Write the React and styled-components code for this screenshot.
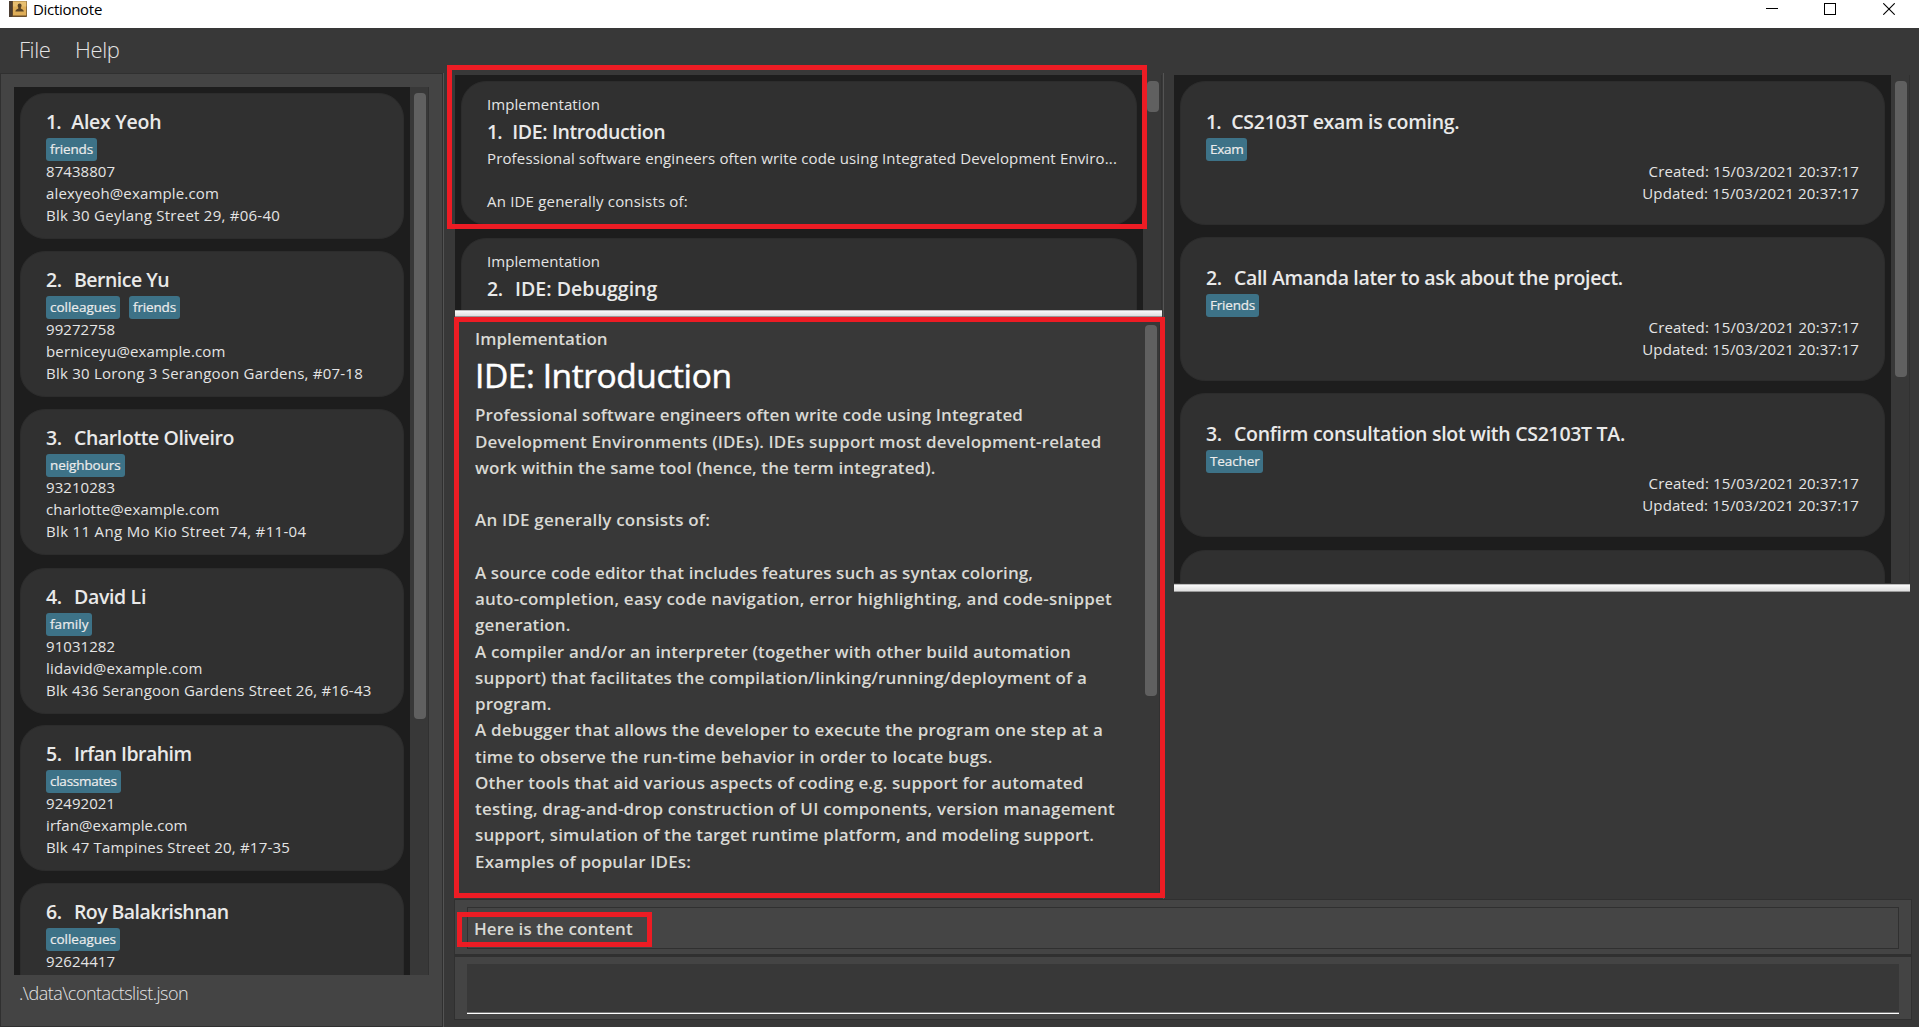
import React from "react";
import styled, { createGlobalStyle } from "styled-components";

const GlobalStyle = createGlobalStyle`
  * { box-sizing: border-box; }
  html, body { margin: 0; padding: 0; }
  body { overflow: hidden; background: #383838; font-family: "Open Sans", "Noto Sans", sans-serif; }
`;

const Window = styled.div`
  position: relative;
  display: flex;
  flex-direction: column;
  width: 1919px;
  height: 1027px;
  overflow: hidden;
  background: #383838;
  color: #e4e4e4;
`;

const TitleBar = styled.header`
  display: flex;
  height: 28px;
  padding: 0 24px 0 9px;
  background: #fff;
  color: #000;
`;

const AppName = styled.span`
  margin-left: 6px;
  font-size: 15px;
  line-height: 18px;
  letter-spacing: -0.3px;
`;

const WindowButtons = styled.div`
  display: flex;
  gap: 46px;
  height: 12px;
  margin: 3px 0 0 auto;

  svg:last-child {
    margin-left: 1px;
  }
`;

const MenuBar = styled.nav`
  display: flex;
  height: 45px;
  padding-left: 19px;
`;

const MenuItem = styled.span`
  width: ${(p) => p.$width}px;
  font-size: 22px;
  font-weight: 300;
  line-height: 42px;
  letter-spacing: ${(p) => p.$track}px;
  white-space: nowrap;
`;

const Main = styled.div`
  display: flex;
  height: 954px;
`;

const ContactsPane = styled.aside`
  width: 443px;
  padding: 13px 13px 0;
  border: 1px solid #303030;
  background: #444;
`;

const ListView = styled.div`
  display: flex;
  width: ${(p) => p.$width}px;
  height: ${(p) => p.$height}px;
  overflow: hidden;
  background: #383838;
`;

const Cells = styled.div`
  display: flex;
  flex: 1;
  flex-direction: column;
  min-width: 0;
  padding: 6px;
  overflow: hidden;
  background: #1d1d1d;
`;

const ScrollTrack = styled.div`
  flex: none;
  width: 19px;
  padding: ${(p) => p.$top ?? 6}px 2px 0 4px;
  border-right: 1px solid #313131;
  background: #383838;
`;

const ScrollThumb = styled.div`
  height: ${(p) => p.$height}px;
  border-radius: 4px;
  background: #606060;
`;

const Card = styled.article`
  display: flex;
  flex: none;
  flex-direction: column;
  height: ${(p) => p.$height}px;
  margin: ${(p) => p.$shift || 0}px 0 ${(p) => p.$gap - (p.$shift || 0)}px;
  padding: ${(p) => p.$pad}px 25px 0;
  border: 1px solid #2c2c2c;
  border-radius: 25px;
  background: #303030;
`;

const Heading = styled.div`
  display: flex;
  flex: none;
  height: 27px;
  margin-top: ${(p) => p.$top || 0}px;
  font-size: 19.5px;
  font-weight: 600;
  line-height: 27px;
  white-space: pre;
  color: #e9e9e9;
`;

const Index = styled.span`
  width: ${(p) => (p.$n === 1 ? 25.3 : 28)}px;
  letter-spacing: ${(p) => (p.$n === 1 ? -1 : -0.4)}px;
`;

const Tracked = styled.span`
  letter-spacing: ${(p) => p.$track || 0}px;
`;

const Tags = styled.div`
  display: flex;
  flex: none;
  gap: 9px;
  height: 22px;
  margin-top: 3px;
`;

const Tag = styled.span`
  flex: none;
  width: ${(p) => p.$width}px;
  height: 23px;
  padding-left: 4px;
  border-radius: 3px;
  background: #3d7287;
  color: #ececec;
  font-size: 13.5px;
  line-height: 22px;
  letter-spacing: ${(p) => p.$track}px;
  -webkit-text-stroke: 0.2px #ececec;
  white-space: nowrap;
`;

const Field = styled.div`
  flex: none;
  height: ${(p) => p.$line || 22}px;
  margin-top: ${(p) => p.$top || 0}px;
  align-self: ${(p) => (p.$right ? "flex-end" : "auto")};
  font-size: 15px;
  line-height: ${(p) => p.$line || 22}px;
  letter-spacing: ${(p) => p.$track || 0}px;
  white-space: nowrap;
`;

const FilePath = styled.div`
  padding: 5px 0 0 5px;
  font-size: 18px;
  font-weight: 300;
  line-height: 26px;
  letter-spacing: -0.5px;
`;

const Separator = styled.div`
  flex: none;
  width: 1px;
  height: ${(p) => p.$height}px;
  background: #545454;
`;

const Workspace = styled.main`
  display: flex;
  flex-direction: column;
  width: 1475px;
  padding-left: 10px;
`;

const Columns = styled.div`
  display: flex;
  height: 826px;
`;

const NotesColumn = styled.section`
  display: flex;
  flex-direction: column;
  width: 709px;
  padding: 2px 0 0 1px;
`;

const Splitter = styled.div`
  flex: none;
  height: ${(p) => p.$height}px;
  width: ${(p) => p.$width}px;
  margin-top: ${(p) => p.$top || 0}px;
  border-bottom: 1px solid #999;
  background: linear-gradient(#bdbdbd 0 1px, #fafafa 1px, #dedede);
`;

const NoteContent = styled.div`
  display: flex;
  height: 575px;
  padding: 8px 3px 0 20px;
`;

const NoteText = styled.div`
  flex: 1;
  min-width: 0;
  padding-top: 1px;
  color: #d9d9d4;
  font-size: 17px;
  font-weight: 600;
  line-height: 26.25px;
  white-space: pre;
`;

const NoteTitle = styled.h1`
  margin: 1px 0 5px;
  color: #fff;
  font-size: 33.5px;
  font-weight: 400;
  line-height: 44px;
  letter-spacing: -0.42px;
  -webkit-text-stroke: 0.5px #fff;
`;

const NoteLine = styled.div`
  height: 26.25px;
  letter-spacing: ${(p) => p.$track || 0}px;
`;

const RemindersColumn = styled.section`
  width: 746px;
  padding: 2px 0 0 10px;
`;

const ResultPanel = styled.section`
  width: 1458px;
  height: 57px;
  padding: 7px 12px;
  border: 1px solid #303030;
  border-bottom-width: 2px;
  background: #444;
`;

const ResultText = styled.div`
  height: 42px;
  padding-left: 6px;
  border: 1px solid #303030;
  background: #454545;
  color: #d9d9d4;
  font-size: 17px;
  font-weight: 600;
  line-height: 41px;
  letter-spacing: 0.1px;
`;

const CommandPanel = styled.section`
  width: 1458px;
  height: 64px;
  padding: 7px 12px;
  border: 1px solid #303030;
  background: #444;
`;

const CommandInput = styled.div`
  height: 50px;
  border-bottom: 1px solid #fff;
  background: #383838;
  box-shadow: inset 0 -1px #777;
`;

const Highlight = styled.div`
  position: absolute;
  left: ${(p) => p.$x}px;
  top: ${(p) => p.$y}px;
  width: ${(p) => p.$w}px;
  height: ${(p) => p.$h}px;
  border: 5px solid #ed1c24;
  pointer-events: none;
`;

const tagStyles = {
  friends: [51, -0.15],
  colleagues: [74, -0.01],
  neighbours: [79, -0.1],
  family: [46, 0.06],
  classmates: [75, -0.25],
  Exam: [41, -0.26],
  Friends: [53, -0.2],
  Teacher: [57, -0.1],
};

const contacts = [
  { name: "Alex Yeoh", track: -0.27, tags: ["friends"], fields: [["87438807", 0.05], ["alexyeoh@example.com", 0.15], ["Blk 30 Geylang Street 29, #06-40", 0.25]] },
  { name: "Bernice Yu", track: -0.52, tags: ["colleagues", "friends"], fields: [["99272758", 0.05], ["berniceyu@example.com", 0.15], ["Blk 30 Lorong 3 Serangoon Gardens, #07-18", 0.23]] },
  { name: "Charlotte Oliveiro", track: -0.4, tags: ["neighbours"], fields: [["93210283", 0.05], ["charlotte@example.com", 0.16], ["Blk 11 Ang Mo Kio Street 74, #11-04", 0.33]] },
  { name: "David Li", track: -0.34, tags: ["family"], fields: [["91031282", 0.05], ["lidavid@example.com", 0.19], ["Blk 436 Serangoon Gardens Street 26, #16-43", 0.19]], shift: 1 },
  { name: "Irfan Ibrahim", track: -0.53, tags: ["classmates"], fields: [["92492021", 0.05], ["irfan@example.com", 0.1], ["Blk 47 Tampines Street 20, #17-35", 0.18]] },
  { name: "Roy Balakrishnan", track: -0.58, tags: ["colleagues"], fields: [["92624417", 0.05]] },
];

const notes = [
  { title: "IDE: Introduction", track: -0.39, body: [["Professional software engineers often write code using Integrated Development Enviro...", 0.146], ["", 0], ["An IDE generally consists of:", 0.19]] },
  { title: "IDE: Debugging", track: 0.04, body: [["Debugging is the process of discovering defects", 0.15]] },
];

const noteLines = [
  ["Professional software engineers often write code using Integrated", 0.108],
  ["Development Environments (IDEs). IDEs support most development-related", 0.141],
  ["work within the same tool (hence, the term integrated).", 0.103],
  ["", 0],
  ["An IDE generally consists of:", 0.189],
  ["", 0],
  ["A source code editor that includes features such as syntax coloring,", 0.094],
  ["auto-completion, easy code navigation, error highlighting, and code-snippet", 0.224],
  ["generation.", 0.1],
  ["A compiler and/or an interpreter (together with other build automation", 0.145],
  ["support) that facilitates the compilation/linking/running/deployment of a", 0.16],
  ["program.", 0.1],
  ["A debugger that allows the developer to execute the program one step at a", 0.181],
  ["time to observe the run-time behavior in order to locate bugs.", 0.161],
  ["Other tools that aid various aspects of coding e.g. support for automated", 0.148],
  ["testing, drag-and-drop construction of UI components, version management", 0.203],
  ["support, simulation of the target runtime platform, and modeling support.", 0.119],
  ["Examples of popular IDEs:", 0.142],
];

const reminders = [
  { title: "CS2103T exam is coming.", track: -0.3, tag: "Exam" },
  { title: "Call Amanda later to ask about the project.", track: -0.33, tag: "Friends" },
  { title: "Confirm consultation slot with CS2103T TA.", track: -0.29, tag: "Teacher" },
  { title: "", track: 0, tag: null },
];

const BookIcon = () => (
  <svg width="18" height="17" viewBox="0 0 18 17">
    <rect x="0" y="1" width="18" height="16" rx="0.8" fill="#6b4f2c" />
    <rect x="4" y="1.5" width="13.3" height="14" fill="#dfae58" />
    <rect x="4" y="1.5" width="13.3" height="5" fill="#e8bf70" />
    <rect x="0" y="1" width="3.2" height="16" fill="#4b3d32" />
    <path d="M8.600 5.600a2 2 0 1 1 4 0c0 1.200-.8 1.800-.8 2.600 0 .9 3 .9 3 3.300H6.400c0-2.400 3-2.400 3-3.300 0-.8-.8-1.400-.8-2.600z" fill="#5a4426" />
  </svg>
);

const MinimizeIcon = () => (
  <svg width="12" height="12" shapeRendering="crispEdges"><path d="M0 5.500H12" stroke="#000" /></svg>
);
const MaximizeIcon = () => (
  <svg width="12" height="12" shapeRendering="crispEdges"><rect x="0.5" y="0.5" width="11" height="11" fill="none" stroke="#000" /></svg>
);
const CloseIcon = () => (
  <svg width="12" height="12"><path d="M0.300 0.300L11.700 11.700M11.700 0.300L0.300 11.700" stroke="#000" strokeWidth="1.100" /></svg>
);

const TagList = ({ names }) => (
  <Tags>
    {names.map((n) => (
      <Tag key={n} $width={tagStyles[n][0]} $track={tagStyles[n][1]}>{n}</Tag>
    ))}
  </Tags>
);

const Title = ({ n, text, track, top }) => (
  <Heading $top={top}>
    <Index $n={n}>{n}.</Index>
    <Tracked $track={track}>{text}</Tracked>
  </Heading>
);

export default function App() {
  return (
    <Window>
      <GlobalStyle />
      <TitleBar>
        <BookIcon />
        <AppName>Dictionote</AppName>
        <WindowButtons>
          <MinimizeIcon />
          <MaximizeIcon />
          <CloseIcon />
        </WindowButtons>
      </TitleBar>
      <MenuBar>
        <MenuItem $width={56} $track={-0.45}>File</MenuItem>
        <MenuItem $width={60} $track={-0.37}>Help</MenuItem>
      </MenuBar>
      <Main>
        <ContactsPane>
          <ListView $width={415} $height={888}>
            <Cells>
              {contacts.map((c, i) => (
                <Card key={c.name} $height={146} $gap={12} $pad={14} $shift={c.shift}>
                  <Title n={i + 1} text={c.name} track={c.track} />
                  <TagList names={c.tags} />
                  {c.fields.map(([t, track]) => (
                    <Field key={t} $track={track}>{t}</Field>
                  ))}
                </Card>
              ))}
            </Cells>
            <ScrollTrack>
              <ScrollThumb $height={626} />
            </ScrollTrack>
          </ListView>
          <FilePath>.\data\contactslist.json</FilePath>
        </ContactsPane>
        <Separator $height={954} />
        <Workspace>
          <Columns>
            <NotesColumn>
              <ListView $width={707} $height={235}>
                <Cells>
                  {notes.map((n, i) => (
                    <Card key={n.title} $height={144} $gap={13} $pad={11}>
                      <Field $track={0.07}>Implementation</Field>
                      <Title n={i + 1} text={n.title} track={n.track} top={3} />
                      {n.body.map(([t, track], j) => (
                        <Field key={j} $line={21.5} $top={j === 0 ? 3 : 0} $track={track}>{t}</Field>
                      ))}
                    </Card>
                  ))}
                </Cells>
                <ScrollTrack>
                  <ScrollThumb $height={31} />
                </ScrollTrack>
              </ListView>
              <Splitter $height={7} $width={707} />
              <NoteContent>
                <NoteText>
                  <NoteLine>Implementation</NoteLine>
                  <NoteTitle>IDE: Introduction</NoteTitle>
                  {noteLines.map(([t, track], i) => (
                    <NoteLine key={i} $track={track}>{t}</NoteLine>
                  ))}
                </NoteText>
                <ScrollTrack $top={0}>
                  <ScrollThumb $height={371} />
                </ScrollTrack>
              </NoteContent>
            </NotesColumn>
            <Separator $height={826} />
            <RemindersColumn>
              <ListView $width={736} $height={508}>
                <Cells>
                  {reminders.map((r, i) => (
                    <Card key={i} $height={144} $gap={12} $pad={26} $shift={i === 3 ? 1 : 0}>
                      {r.tag && (
                        <>
                          <Title n={i + 1} text={r.title} track={r.track} />
                          <TagList names={[r.tag]} />
                          <Field $right $track={0.16}>Created: 15/03/2021 20:37:17</Field>
                          <Field $right $track={0.2}>Updated: 15/03/2021 20:37:17</Field>
                        </>
                      )}
                    </Card>
                  ))}
                </Cells>
                <ScrollTrack>
                  <ScrollThumb $height={296} />
                </ScrollTrack>
              </ListView>
              <Splitter $height={8} $width={736} $top={1} />
            </RemindersColumn>
          </Columns>
          <ResultPanel>
            <ResultText>Here is the content</ResultText>
          </ResultPanel>
          <CommandPanel>
            <CommandInput />
          </CommandPanel>
        </Workspace>
      </Main>
      <Highlight $x={447} $y={65} $w={700} $h={164} />
      <Highlight $x={454} $y={317} $w={711} $h={581} />
      <Highlight $x={457} $y={912} $w={195} $h={35} />
    </Window>
  );
}
